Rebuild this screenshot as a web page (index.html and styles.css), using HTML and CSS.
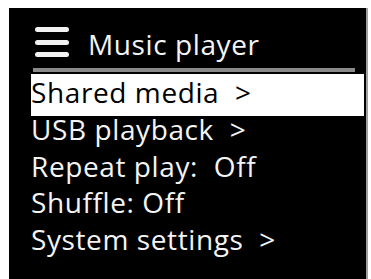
FILE: index.html
```html
<!DOCTYPE html>
<html>
<head>
<meta charset="utf-8">
<link rel="stylesheet" href="styles.css">
</head>
<body>
<div class="screen">
  <div class="header">
    <svg class="menu-icon" width="34" height="31" viewBox="0 0 34 31">
      <rect x="0" y="0" width="34" height="5" rx="2.5" fill="#f2f2f2"/>
      <rect x="0" y="13" width="34" height="5" rx="2.5" fill="#f2f2f2"/>
      <rect x="0" y="25" width="34" height="5" rx="2.5" fill="#f2f2f2"/>
    </svg>
    <span class="title">Music player</span>
  </div>
  <div class="rule"></div>
  <ul class="menu">
    <li class="item selected">Shared media  &gt;</li>
    <li class="item">USB playback  &gt;</li>
    <li class="item">Repeat play:  Off</li>
    <li class="item">Shuffle: Off</li>
    <li class="item">System settings  &gt;</li>
  </ul>
</div>
</body>
</html>
```

FILE: styles.css
```css
html, body {
  margin: 0;
  padding: 0;
  background: #ffffff;
}
body {
  padding: 8px 0 0 9px;
  height: 279px;
  box-sizing: border-box;
  overflow: hidden;
}
.screen {
  width: 359px;
  height: 271px;
  background: #000;
  border-right: 2px solid #a0a0a0;
  box-sizing: border-box;
  font-family: "Open Sans", sans-serif;
  color: #f4f4f4;
  letter-spacing: 0.6px;
}
.header {
  display: flex;
  align-items: flex-start;
  padding: 19px 0 0 26px;
  height: 60px;
  box-sizing: border-box;
}
.menu-icon {
  flex: none;
}
.title {
  margin-left: 19px;
  margin-top: 2px;
  font-size: 28px;
  line-height: 30px;
  white-space: pre;
}
.rule {
  margin: 0 11px 0 24px;
  height: 4px;
  background: #8a8a8a;
}
.menu {
  list-style: none;
  margin: 2px 0 0 0;
  padding: 0;
}
.item {
  font-size: 28px;
  line-height: 36.5px;
  padding-left: 22px;
  white-space: pre;
}
.item.selected {
  background: #fff;
  color: #000;
  margin: 0 2px -5px 22px;
  padding-left: 0;
  line-height: 37px;
  height: 42px;
  box-sizing: border-box;
}
```
